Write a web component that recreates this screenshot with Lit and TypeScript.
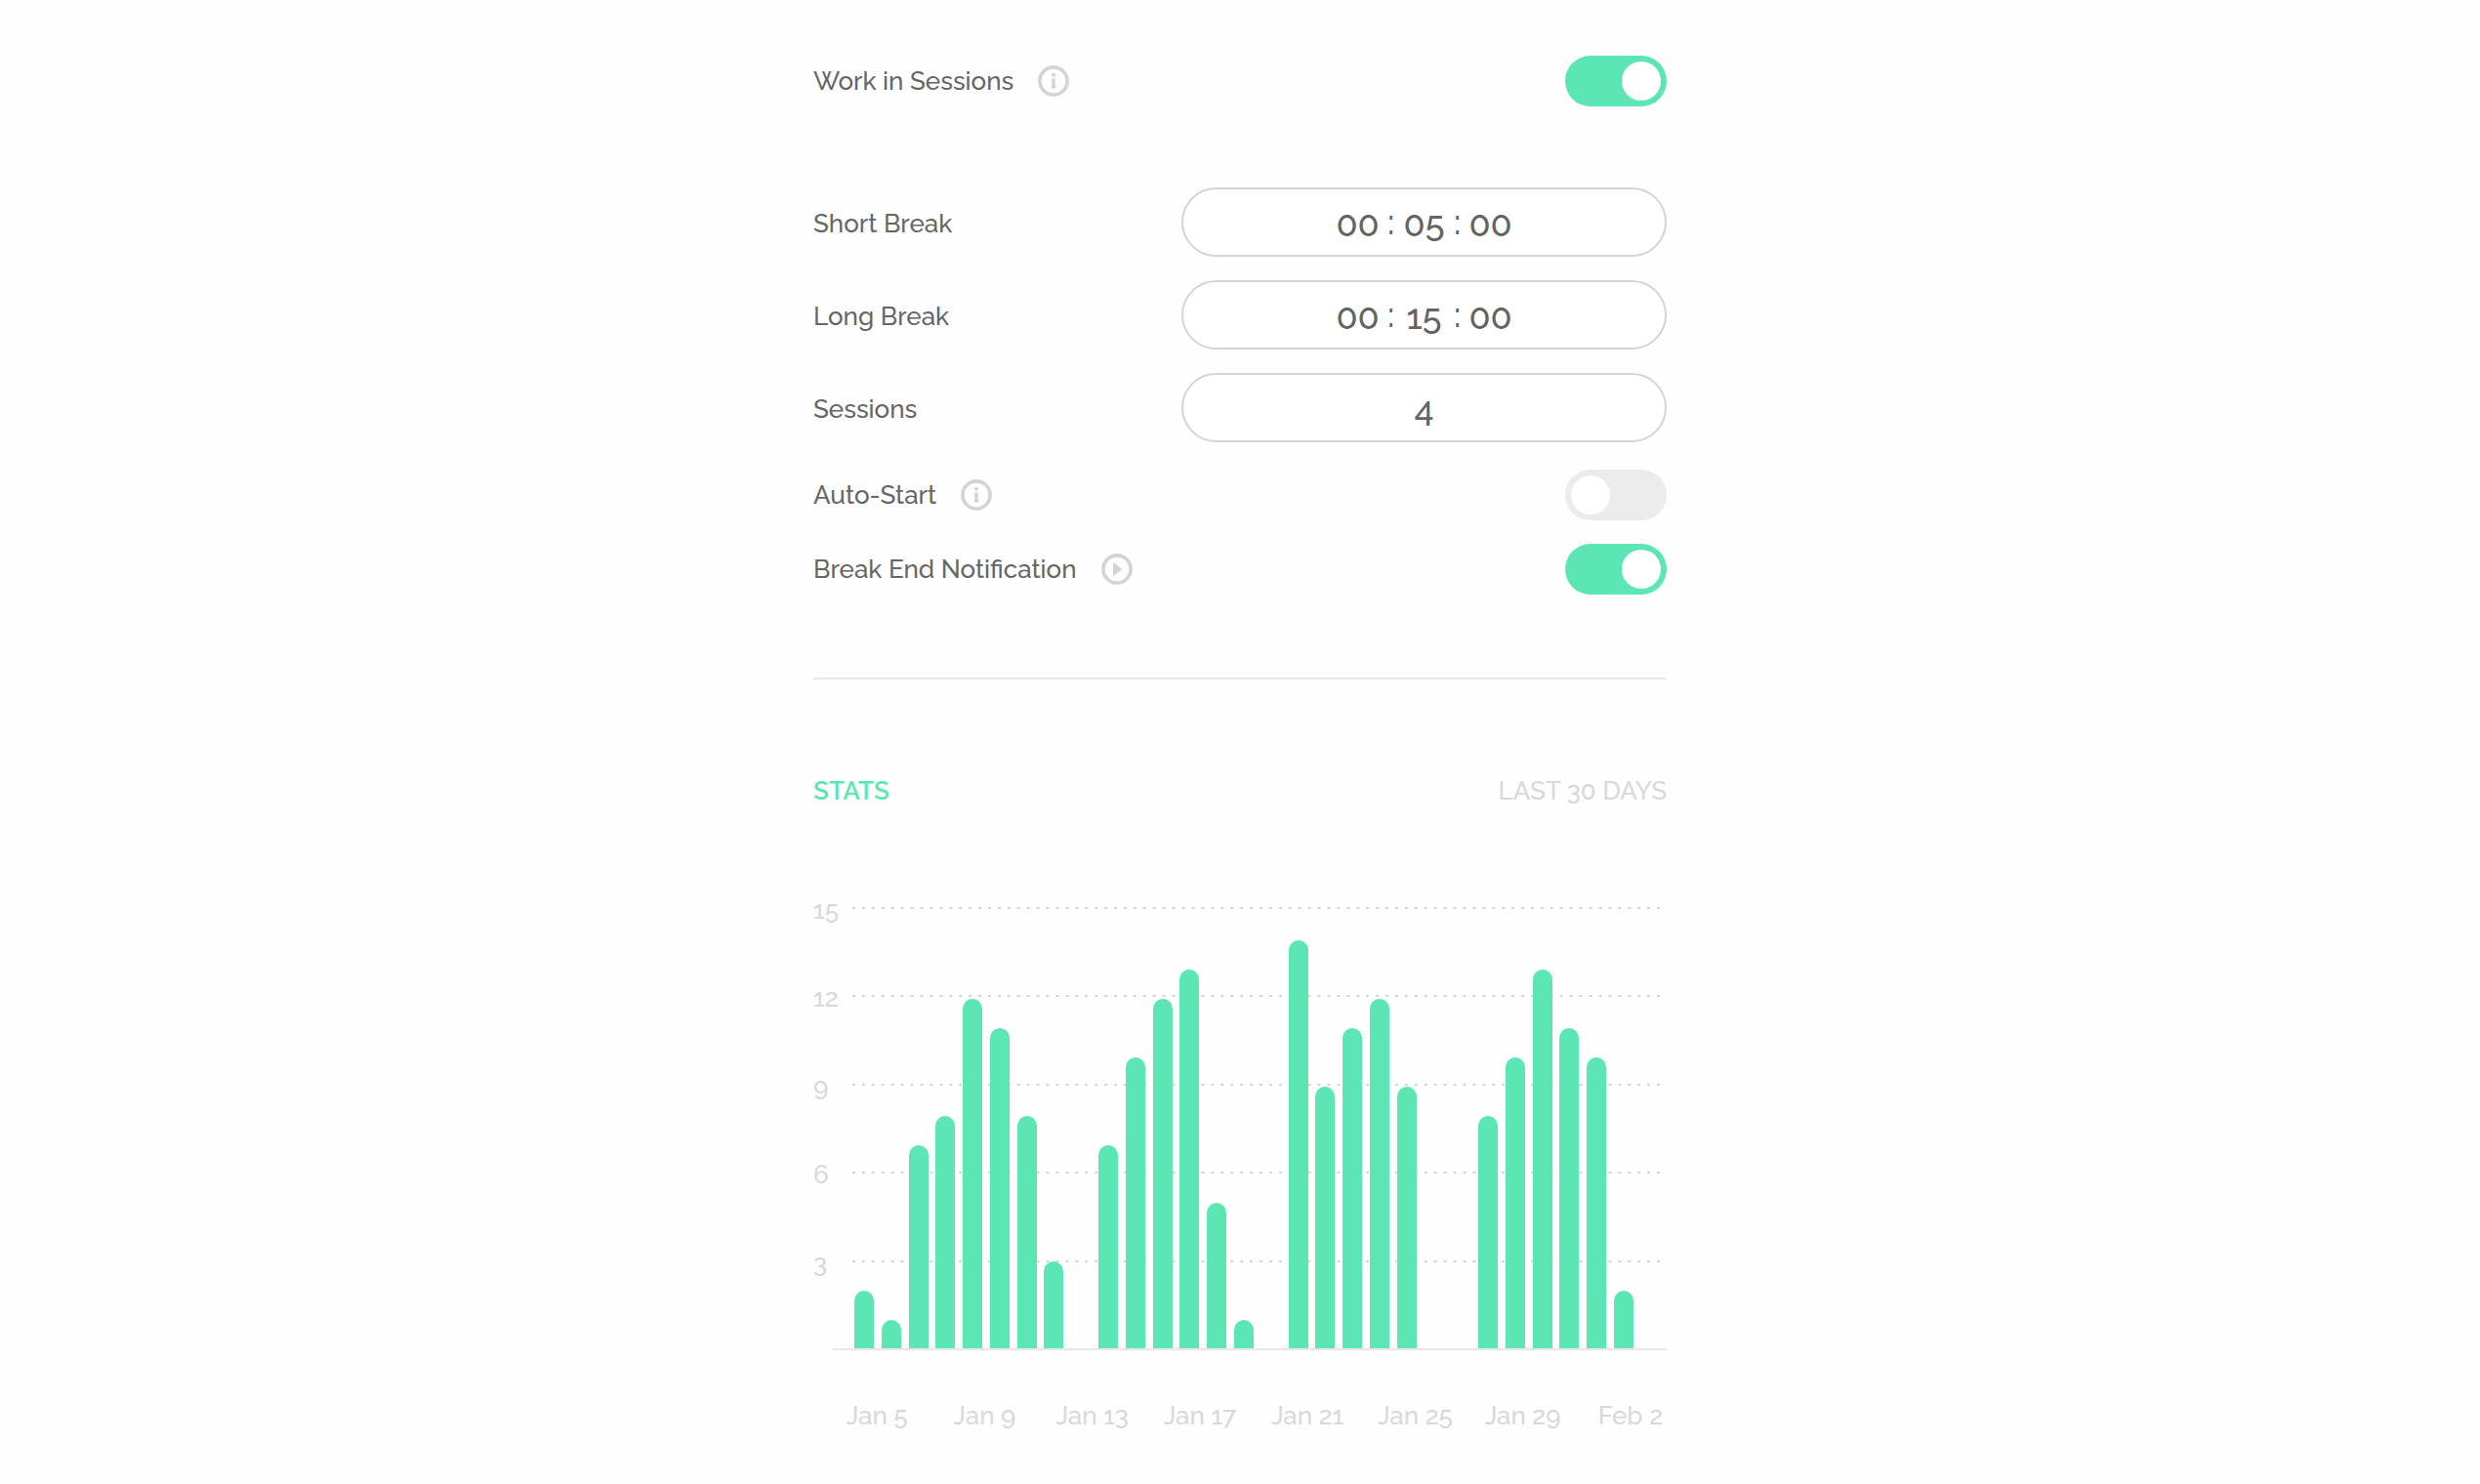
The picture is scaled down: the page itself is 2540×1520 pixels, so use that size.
import { LitElement, html, css, svg } from "lit";
import { customElement, property, state } from "lit/decorators.js";

const GREEN = css`#5ce6b4`;
const FONT = css`Raleway, Lato, "Open Sans", sans-serif`;

/** On/off switch built on a native checkbox. */
@customElement("toggle-switch")
class ToggleSwitch extends LitElement {
  @property({ type: Boolean }) checked = false;
  @property() label = "";

  static styles = css`
    :host {
      display: flex;
    }
    .switch {
      appearance: none;
      box-sizing: border-box;
      display: flex;
      width: 104px;
      height: 52px;
      margin: 0;
      padding: 6px;
      border-radius: 26px;
      background: #ebebeb;
      cursor: pointer;
    }
    .switch::before {
      content: "";
      width: 40px;
      height: 40px;
      border-radius: 50%;
      background: #fff;
    }
    .switch:checked {
      justify-content: flex-end;
      background: ${GREEN};
    }
  `;

  render() {
    return html`<input
      class="switch"
      type="checkbox"
      role="switch"
      aria-label=${this.label}
      .checked=${this.checked}
      @change=${(e: Event) => (this.checked = (e.target as HTMLInputElement).checked)}
    />`;
  }
}

/** Pill holding one or more two-digit fields separated by colons. */
@customElement("number-pill")
class NumberPill extends LitElement {
  @property() label = "";
  @property({ type: Array }) parts: string[] = [];
  @property({ type: Array }) units: string[] = [];

  static styles = css`
    .pill {
      box-sizing: border-box;
      display: flex;
      align-items: center;
      justify-content: center;
      height: 71px;
      padding-top: 2px;
      border: 2px solid #d4d4d4;
      border-radius: 36px;
      background: #fff;
      color: #636363;
      font-family: ${FONT};
      font-size: 36px;
      font-weight: 500;
      line-height: 44px;
      font-variant-numeric: oldstyle-nums proportional-nums;
    }
    .field {
      width: 48px;
      margin: 0;
      padding: 0;
      border: 0;
      outline: 0;
      background: none;
      color: inherit;
      font: inherit;
      font-variant-numeric: inherit;
      text-align: center;
    }
    .colon {
      width: 20px;
      padding-bottom: 4px;
      text-align: center;
    }
  `;

  render() {
    return html`<div class="pill" role="group" aria-label=${this.label}>
      ${this.parts.map(
        (part, i) => html`${i > 0 ? html`<span class="colon">:</span>` : ""}<input
            class="field"
            type="text"
            inputmode="numeric"
            aria-label=${`${this.label} ${this.units[i] ?? ""}`.trim()}
            .value=${part}
          />`
      )}
    </div>`;
  }
}

/** Vertical bar chart of completed sessions per day. */
@customElement("stats-chart")
class StatsChart extends LitElement {
  @property({ type: Array }) values: number[] = [];
  @property({ type: Array }) dates: string[] = [];
  private ticks = [15, 12, 9, 6, 3];

  static styles = css`
    :host {
      display: block;
      color: #d8d8d8;
      font-family: ${FONT};
      font-size: 26px;
      font-weight: 500;
      line-height: 32px;
      font-variant-numeric: oldstyle-nums proportional-nums;
    }
    .plot {
      display: grid;
      grid-template-columns: 40px 1fr;
      grid-template-rows: repeat(5, 1fr);
      height: 452px;
    }
    .tick {
      grid-column: 1;
      margin-top: -13px;
    }
    .line {
      grid-column: 2;
      width: calc(100% - 7px);
      height: 2px;
    }
    .bars {
      grid-column: 2;
      grid-row: 1 / -1;
      display: flex;
      align-items: flex-end;
      justify-content: space-between;
      padding: 0 6px 0 2px;
    }
    .bar {
      flex: 0 1 20px;
      border-radius: 10px 10px 0 0;
      background: ${GREEN};
    }
    .baseline {
      height: 2px;
      margin-left: 20px;
      background: #e8e8e8;
    }
    .dates {
      display: grid;
      grid-template-columns: repeat(8, 1fr);
      margin: 51px -18px 0 10px;
      text-align: center;
      white-space: nowrap;
    }
  `;

  render() {
    return html`
      <div class="plot">
        ${this.ticks.map(
          (t, i) => html`<span class="tick" style="grid-row:${i + 1}">${t}</span>
            <svg class="line" style="grid-row:${i + 1}" aria-hidden="true">
              <line x1="0" y1="1" x2="100%" y2="1" pathLength="833" stroke="#d4d4d4" stroke-width="2" stroke-dasharray="3 7" />
            </svg>`
        )}
        <div class="bars">
          ${this.values.map(
            (v) => html`<span class="bar" style="height:${v ? `calc(${(v / 15) * 99.3}% - 1px)` : "0"}"></span>`
          )}
        </div>
      </div>
      <div class="baseline"></div>
      <div class="dates">${this.dates.map((d) => html`<span>${d}</span>`)}</div>
    `;
  }
}

const infoGlyph = svg`
  <circle cx="16" cy="9.8" r="2" fill="currentColor"/>
  <path d="M14.2 13.6h3.6v8h.6v2h-4.8v-2h.6z" fill="currentColor"/>`;
const playGlyph = svg`<path d="M12 8.8 21.4 16l-9.4 7.2z" fill="currentColor"/>`;

@customElement("app-root")
class AppRoot extends LitElement {
  @state() private values = [
    2, 1, 7, 8, 12, 11, 8, 3, 0, 7, 10, 12, 13, 5, 1, 0, 14, 9, 11, 12, 9, 0, 0, 8, 10, 13, 11, 10, 2, 0,
  ];
  private dates = ["Jan 5", "Jan 9", "Jan 13", "Jan 17", "Jan 21", "Jan 25", "Jan 29", "Feb 2"];

  static styles = css`
    :host {
      display: block;
      min-height: 100vh;
      background: #fefefe;
      color: #666;
      font-family: ${FONT};
      font-size: 26px;
      font-weight: 500;
      line-height: 32px;
      font-variant-numeric: oldstyle-nums proportional-nums;
    }
    .page {
      box-sizing: border-box;
      width: 100%;
      max-width: 922px;
      margin: 0 auto;
      padding: 57px 24px 44px;
    }
    .row {
      display: flex;
      align-items: center;
      justify-content: space-between;
      gap: 24px;
    }
    .title {
      display: flex;
      align-items: center;
      gap: 25px;
    }
    .fields {
      display: grid;
      gap: 24px;
      margin: 83px 0 28px;
    }
    .name {
      padding-top: 2px;
    }
    .pill {
      flex: 0 1 497px;
    }
    .switches {
      display: grid;
      gap: 24px;
    }
    .icon {
      display: flex;
      padding: 0;
      border: 0;
      background: none;
      color: #d4d4d4;
      cursor: pointer;
    }
    .rule {
      height: 2px;
      margin: 85px 0 98px;
      border: 0;
      background: #e8e8e8;
    }
    .heading {
      margin: 0;
      color: ${GREEN};
      font-size: 26px;
      font-weight: 600;
    }
    .range {
      color: #d8d8d8;
    }
    .chart {
      margin-top: 103px;
    }
  `;

  private icon(label: string, glyph: unknown) {
    return html`<button class="icon" type="button" aria-label=${label}>
      <svg width="32" height="32" viewBox="0 0 32 32" aria-hidden="true">
        <circle cx="16" cy="16" r="14.1" fill="none" stroke="currentColor" stroke-width="3.6" />
        ${glyph}
      </svg>
    </button>`;
  }

  private pillRow(label: string, parts: string[], units: string[]) {
    return html`<div class="row">
      <span class="name">${label}</span>
      <number-pill class="pill" .label=${label} .parts=${parts} .units=${units}></number-pill>
    </div>`;
  }

  private switchRow(label: string, checked: boolean, icon: unknown) {
    return html`<div class="row">
      <div class="title"><span>${label}</span>${icon}</div>
      <toggle-switch .label=${label} .checked=${checked}></toggle-switch>
    </div>`;
  }

  render() {
    const time = ["hours", "minutes", "seconds"];
    return html`<main class="page">
      ${this.switchRow("Work in Sessions", true, this.icon("About sessions", infoGlyph))}
      <div class="fields">
        ${this.pillRow("Short Break", ["00", "05", "00"], time)}
        ${this.pillRow("Long Break", ["00", "15", "00"], time)}
        ${this.pillRow("Sessions", ["4"], [])}
      </div>
      <div class="switches">
        ${this.switchRow("Auto-Start", false, this.icon("About auto-start", infoGlyph))}
        ${this.switchRow("Break End Notification", true, this.icon("Play sound", playGlyph))}
      </div>
      <hr class="rule" />
      <div class="row">
        <h2 class="heading">STATS</h2>
        <span class="range">LAST 30 DAYS</span>
      </div>
      <stats-chart class="chart" .values=${this.values} .dates=${this.dates}></stats-chart>
    </main>`;
  }
}
